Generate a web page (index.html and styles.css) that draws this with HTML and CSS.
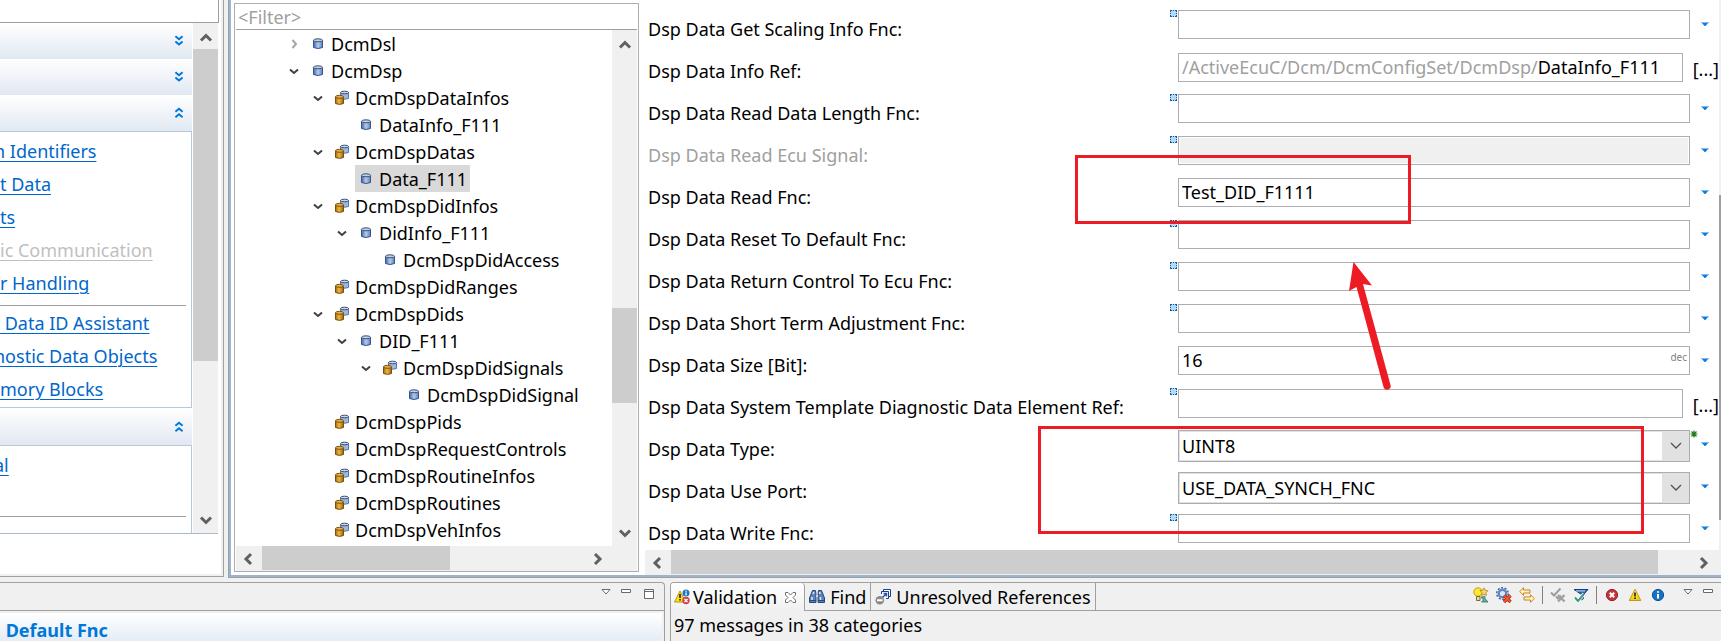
FILE: index.html
```html
<!DOCTYPE html>
<html lang="en">
<head>
<meta charset="utf-8">
<title>Configuration Editor</title>
<link rel="stylesheet" href="styles.css">
</head>
<body>
<svg class="defs" aria-hidden="true">
  <defs>
    <linearGradient id="gBlue"><stop offset="0" stop-color="#3f67a8"/><stop offset=".5" stop-color="#b4cdec"/><stop offset="1" stop-color="#5c80b8"/></linearGradient>
    <linearGradient id="gGold"><stop offset="0" stop-color="#a86c0c"/><stop offset=".45" stop-color="#e8b848"/><stop offset="1" stop-color="#9c6408"/></linearGradient>
    <linearGradient id="gWarn" x2="0" y2="1"><stop offset="0" stop-color="#fff27a"/><stop offset="1" stop-color="#f2c800"/></linearGradient>
  </defs>
  <symbol id="item" viewBox="0 0 16 16"><path d="M3.500 4.500v7q4.500 2 9 0v-7z" fill="url(#gBlue)" stroke="#34558f"/><ellipse cx="8" cy="4.300" rx="4.500" ry="1.500" fill="#bcd3ee" stroke="#44506e"/></symbol>
  <symbol id="group" viewBox="0 0 16 16"><path d="M6.500 2.500v6q4 1.500 8 0v-6z" fill="#9db9df" stroke="#5576ab"/><ellipse cx="10.500" cy="2.500" rx="4" ry="1.300" fill="#c6d9f0" stroke="#3c4d70"/><path d="M1.500 7v6.500q4 1.800 8 0V7z" fill="url(#gGold)" stroke="#7c4d08"/><ellipse cx="5.500" cy="6.800" rx="4" ry="1.500" fill="#e2b04a" stroke="#7c4d08"/></symbol>
  <symbol id="open" viewBox="0 0 16 16"><path d="M4 6.500l4 3.500 4-3.500" fill="none" stroke="#404040" stroke-width="2"/></symbol>
  <symbol id="closed" viewBox="0 0 16 16"><path d="M6.500 4l3.500 4-3.500 4" fill="none" stroke="#a6a6a6" stroke-width="2"/></symbol>
  <symbol id="up" viewBox="0 0 16 16"><path d="M3 10.500l5-5 5 5" fill="none" stroke="#606060" stroke-width="3"/></symbol>
  <symbol id="down" viewBox="0 0 16 16"><path d="M3 5.500l5 5 5-5" fill="none" stroke="#606060" stroke-width="3"/></symbol>
  <symbol id="left" viewBox="0 0 16 16"><path d="M11 3l-5 5 5 5" fill="none" stroke="#606060" stroke-width="3"/></symbol>
  <symbol id="right" viewBox="0 0 16 16"><path d="M5 3l5 5-5 5" fill="none" stroke="#606060" stroke-width="3"/></symbol>
  <symbol id="expand" viewBox="0 0 10 10"><path d="M2 1l3 2.500L8 1M2 5.500L5 8l3-2.500" fill="none" stroke="#0078d7" stroke-width="1.600"/></symbol>
  <symbol id="collapse" viewBox="0 0 10 10"><path d="M2 4l3-2.500L8 4M2 8.500L5 6l3 2.500" fill="none" stroke="#0078d7" stroke-width="1.600"/></symbol>
  <symbol id="drop" viewBox="0 0 8 4"><path d="M0 0h8L4 4.500z" fill="#0a7be0"/><path d="M0 0h8L7 1H1z" fill="#7fbdf2"/></symbol>
  <symbol id="viewmenu" viewBox="0 0 10 6"><path d="M1 .5h8l-4 4.500z" fill="#fff" stroke="#696969"/></symbol>
  <symbol id="min" viewBox="0 0 10 4"><path d="M.5.5h9v3h-9z" fill="#fff" stroke="#696969"/></symbol>
  <symbol id="max" viewBox="0 0 10 10"><path d="M.5.5h9v9h-9zM.5 2.500h9" fill="#fff" stroke="#696969"/></symbol>
  <symbol id="unset" viewBox="0 0 7 7"><path d="M0 0h7v7H0z" fill="#b4daf7"/><path d="M0 .5h7M0 6.500h7" stroke="#1558a0" stroke-dasharray="2 1 1 1 2 0"/><path d="M.5 0v7M6.500 0v7" stroke="#1558a0" stroke-dasharray="2 1 1 1 2 0"/></symbol>
</svg>

<div class="workbench">
  <aside class="tasks">
    <div class="tasks-gap"></div>
    <div class="tasks-scroll">
      <div class="sections">
        <button class="section-head" aria-label="Expand section"><svg><use href="#expand"/></svg></button>
        <button class="section-head" aria-label="Expand section"><svg><use href="#expand"/></svg></button>
        <button class="section-head" aria-label="Collapse section"><svg><use href="#collapse"/></svg></button>
        <nav class="section-body">
          <a class="cut" href="#">n Identifiers</a>
          <a href="#">t Data</a>
          <a href="#">ts</a>
          <a class="off" href="#">ic Communication</a>
          <a href="#">r Handling</a>
          <hr>
          <a href="#">&nbsp;Data ID Assistant</a>
          <a class="cut" href="#">nostic Data Objects</a>
          <a href="#">mory Blocks</a>
        </nav>
        <button class="section-head next" aria-label="Collapse section"><svg><use href="#collapse"/></svg></button>
        <nav class="section-body last">
          <a class="cut" href="#">al</a>
          <hr>
        </nav>
      </div>
      <div class="vbar"><svg class="arr"><use href="#up"/></svg><div class="thumb tasks-thumb"></div><svg class="arr"><use href="#down"/></svg></div>
    </div>
  </aside>

  <main class="editor">
    <section class="tree-pane">
      <input class="filter" type="text" placeholder="&lt;Filter&gt;" aria-label="Filter">
      <div class="tree-scroll">
        <ul class="tree">
          <li class="d0"><svg><use href="#closed"/></svg><span><svg><use href="#item"/></svg>DcmDsl</span></li>
          <li class="d0"><svg><use href="#open"/></svg><span><svg><use href="#item"/></svg>DcmDsp</span></li>
          <li class="d1"><svg><use href="#open"/></svg><span><svg><use href="#group"/></svg>DcmDspDataInfos</span></li>
          <li class="d2"><svg></svg><span><svg><use href="#item"/></svg>DataInfo_F111</span></li>
          <li class="d1"><svg><use href="#open"/></svg><span><svg><use href="#group"/></svg>DcmDspDatas</span></li>
          <li class="d2"><svg></svg><span class="selected"><svg><use href="#item"/></svg>Data_F111</span></li>
          <li class="d1"><svg><use href="#open"/></svg><span><svg><use href="#group"/></svg>DcmDspDidInfos</span></li>
          <li class="d2"><svg><use href="#open"/></svg><span><svg><use href="#item"/></svg>DidInfo_F111</span></li>
          <li class="d3"><svg></svg><span><svg><use href="#item"/></svg>DcmDspDidAccess</span></li>
          <li class="d1"><svg></svg><span><svg><use href="#group"/></svg>DcmDspDidRanges</span></li>
          <li class="d1"><svg><use href="#open"/></svg><span><svg><use href="#group"/></svg>DcmDspDids</span></li>
          <li class="d2"><svg><use href="#open"/></svg><span><svg><use href="#item"/></svg>DID_F111</span></li>
          <li class="d3"><svg><use href="#open"/></svg><span><svg><use href="#group"/></svg>DcmDspDidSignals</span></li>
          <li class="d4"><svg></svg><span><svg><use href="#item"/></svg>DcmDspDidSignal</span></li>
          <li class="d1"><svg></svg><span><svg><use href="#group"/></svg>DcmDspPids</span></li>
          <li class="d1"><svg></svg><span><svg><use href="#group"/></svg>DcmDspRequestControls</span></li>
          <li class="d1"><svg></svg><span><svg><use href="#group"/></svg>DcmDspRoutineInfos</span></li>
          <li class="d1"><svg></svg><span><svg><use href="#group"/></svg>DcmDspRoutines</span></li>
          <li class="d1"><svg></svg><span><svg><use href="#group"/></svg>DcmDspVehInfos</span></li>
        </ul>
        <div class="vbar"><svg class="arr"><use href="#up"/></svg><div class="thumb tree-thumb"></div><svg class="arr"><use href="#down"/></svg></div>
      </div>
      <div class="hbar tree-hbar"><svg class="arr"><use href="#left"/></svg><div class="thumb"></div><svg class="arr"><use href="#right"/></svg></div>
    </section>

    <section class="form-pane">
      <form class="form">
        <div class="row"><label for="f1">Dsp Data Get Scaling Info Fnc:</label><svg class="mark"><use href="#unset"/></svg><input id="f1" type="text"><button type="button" class="menu" aria-label="Menu"><svg><use href="#drop"/></svg></button></div>
        <div class="row ref"><label for="f2">Dsp Data Info Ref:</label><i></i><div id="f2" class="path" role="textbox" tabindex="0"><span>/ActiveEcuC/Dcm/DcmConfigSet/DcmDsp/</span>DataInfo_F111</div><button type="button" class="browse">[...]</button></div>
        <div class="row"><label for="f3">Dsp Data Read Data Length Fnc:</label><svg class="mark"><use href="#unset"/></svg><input id="f3" type="text"><button type="button" class="menu" aria-label="Menu"><svg><use href="#drop"/></svg></button></div>
        <div class="row"><label class="off" for="f4">Dsp Data Read Ecu Signal:</label><svg class="mark"><use href="#unset"/></svg><input id="f4" type="text" disabled><button type="button" class="menu" aria-label="Menu"><svg><use href="#drop"/></svg></button></div>
        <div class="row"><label for="f5">Dsp Data Read Fnc:</label><i></i><input id="f5" type="text" value="Test_DID_F1111"><button type="button" class="menu" aria-label="Menu"><svg><use href="#drop"/></svg></button></div>
        <div class="row"><label for="f6">Dsp Data Reset To Default Fnc:</label><svg class="mark"><use href="#unset"/></svg><input id="f6" type="text"><button type="button" class="menu" aria-label="Menu"><svg><use href="#drop"/></svg></button></div>
        <div class="row"><label for="f7">Dsp Data Return Control To Ecu Fnc:</label><svg class="mark"><use href="#unset"/></svg><input id="f7" type="text"><button type="button" class="menu" aria-label="Menu"><svg><use href="#drop"/></svg></button></div>
        <div class="row"><label for="f8">Dsp Data Short Term Adjustment Fnc:</label><svg class="mark"><use href="#unset"/></svg><input id="f8" type="text"><button type="button" class="menu" aria-label="Menu"><svg><use href="#drop"/></svg></button></div>
        <div class="row"><label for="f9">Dsp Data Size [Bit]:</label><i></i><div class="num"><input id="f9" type="text" value="16"><small>dec</small></div><button type="button" class="menu" aria-label="Menu"><svg><use href="#drop"/></svg></button></div>
        <div class="row ref"><label for="f10">Dsp Data System Template Diagnostic Data Element Ref:</label><svg class="mark"><use href="#unset"/></svg><input id="f10" type="text"><button type="button" class="browse">[...]</button></div>
        <div class="row"><label for="f11">Dsp Data Type:</label><i></i><div class="combo"><select id="f11"><option>UINT8</option></select><svg class="chev" viewBox="0 0 12 8"><path d="M1 1l5 5 5-5" fill="none" stroke="#505050" stroke-width="1.300"/></svg><svg class="star" viewBox="0 0 8 8"><path d="M4 .5v7M.5 4h7M1.500 1.500l5 5M6.500 1.500l-5 5" stroke="#1c7a1c" stroke-width="1.200"/></svg></div><button type="button" class="menu" aria-label="Menu"><svg><use href="#drop"/></svg></button></div>
        <div class="row"><label for="f12">Dsp Data Use Port:</label><i></i><div class="combo"><select id="f12"><option>USE_DATA_SYNCH_FNC</option></select><svg class="chev" viewBox="0 0 12 8"><path d="M1 1l5 5 5-5" fill="none" stroke="#505050" stroke-width="1.300"/></svg></div><button type="button" class="menu" aria-label="Menu"><svg><use href="#drop"/></svg></button></div>
        <div class="row"><label for="f13">Dsp Data Write Fnc:</label><svg class="mark"><use href="#unset"/></svg><input id="f13" type="text"><button type="button" class="menu" aria-label="Menu"><svg><use href="#drop"/></svg></button></div>
      </form>
      <div class="form-bar"><div class="thumb"></div></div>
      <div class="hbar form-hbar"><svg class="arr"><use href="#left"/></svg><div class="thumb"></div><svg class="arr"><use href="#right"/></svg></div>

      <div class="note note-read"></div>
      <div class="note note-type"></div>
      <svg class="pointer" viewBox="0 0 48 132"><path d="M8.500 0L27 23.500l-9-1.500L45.500 123a3.500 3.500 0 0 1-7 2L11.500 25 4 29z" fill="#ed1c24"/></svg>
    </section>
  </main>
</div>

<div class="views">
  <section class="view view-left">
    <header class="bar">
      <div class="controls">
        <svg class="i-menu"><use href="#viewmenu"/></svg>
        <svg class="i-min"><use href="#min"/></svg>
        <svg class="i-max"><use href="#max"/></svg>
      </div>
    </header>
    <h2>&nbsp;Default Fnc</h2>
  </section>

  <section class="view view-right">
    <header class="bar">
      <button class="tab active">
        <svg class="i16" viewBox="0 0 16 16"><path d="M6 2L11.500 13H.5z" fill="#ffe020" stroke="#b89400"/><path d="M5.200 5h1.600v4H5.200zM5.200 10h1.600v1.500H5.200z" fill="#222"/><circle cx="12" cy="4" r="3.500" fill="#1b78c8"/><path d="M11.400 1.500h1.300v1.200h-1.300zM11.400 3.400h1.300v3h-1.300z" fill="#fff"/><circle cx="12" cy="11.500" r="3.700" fill="#d4424a"/><path d="M10.500 10l3 3m0-3l-3 3" stroke="#fff" stroke-width="1.300"/></svg>
        <span>Validation</span>
        <svg class="close" viewBox="0 0 11 11"><path d="M.5.5h2.500l2.500 2.500L8 .5h2.500V3L8 5.500 10.500 8v2.500H8L5.500 8 3 10.500H.5V8L3 5.500.5 3z" fill="#fff" stroke="#6e6e6e"/></svg>
      </button>
      <button class="tab">
        <svg class="i16" viewBox="0 0 16 16"><path d="M3.500 1.500h3l.5 4v8H.5V9zM9.500 1.500h3L15.500 9v4.500H9v-8z" fill="#5c83b8" stroke="#28487c"/><path d="M3 8v3M11.500 8v3M7 7h2M4.500 3v2M10.800 3v2" stroke="#dce8f6" stroke-width="1.500"/><path d="M1 11.500h6M9 11.500h6" stroke="#28487c"/></svg>
        <span>Find</span>
      </button>
      <button class="tab">
        <svg class="i16" viewBox="0 0 16 16"><path d="M8.500 3V.5h7v7H13M6.500 5V2.500h7v7H11" fill="#fff" stroke="#1c3f8c"/><path d="M7.500 8.500L11 5M8.500 4.500h3v3" fill="none" stroke="#1f56b4" stroke-width="1.500"/><circle cx="4.800" cy="11.200" r="4.300" fill="#8a8a8a"/><path d="M2 10.200h5.600v2H2z" fill="#fff"/></svg>
        <span>Unresolved References</span>
      </button>
      <div class="tools">
        <button class="tool" aria-label="Quick fix"><svg viewBox="0 0 16 16"><circle cx="5" cy="5" r="4.200" fill="#ffe92e" stroke="#c99a10"/><path d="M3.500 9.500h3.500v4H3.500z" fill="#e8e2a0" stroke="#7c6a2a"/><path d="M11 .8l1.200 2.400 2.800.5-2 2 .4 2.800L11 7.300 8.700 8.500 9 5.700l-2-2 2.800-.5z" fill="#f7d867" stroke="#a8852a" stroke-width=".8"/><path d="M8 10l4-.5v2l3 3.500H8.500l2-2z" fill="#5fae9c" stroke="#2f7466" stroke-width=".8"/></svg></button>
        <button class="tool" aria-label="Clear configuration"><svg viewBox="0 0 16 16"><circle cx="6.500" cy="6.500" r="5.800" fill="none" stroke="#3d629e" stroke-width="1.400" stroke-dasharray="2 1.600"/><circle cx="6.500" cy="6.500" r="3.800" fill="#dbe6f5" stroke="#5f87c4" stroke-width="2.400"/><path d="M8 8.500l6.500 6.500M14.500 8.500L8 15" stroke="#8c1c08" stroke-width="3.200"/><path d="M8 8.500l6.500 6.500M14.500 8.500L8 15" stroke="#f4552c" stroke-width="2"/></svg></button>
        <button class="tool" aria-label="Synchronize"><svg viewBox="0 0 16 16"><path d="M.7 4.500L4.500.7v2.300h6.500v3H4.500v2.300zM15.300 11.500l-3.800-3.800V10H5v3h6.500v2.300z" fill="#fff3c4" stroke="#c8861c"/></svg></button>
        <hr>
        <button class="tool" aria-label="Remove acknowledged" disabled><svg viewBox="0 0 16 16"><path d="M1 5.500l3 3L10.500 1.500M6 9.500l2 2 3-3" fill="none" stroke="#9c9c9c" stroke-width="2"/><path d="M8 8l6.500 6.500M14.500 8L8 14.500" stroke="#a0a0a0" stroke-width="2.400"/></svg></button>
        <button class="tool" aria-label="Filter"><svg viewBox="0 0 16 16"><path d="M1 2.500h14L10.500 7.500v4l-2 1.500V7.500z" fill="#2f66b8" stroke="#173a7c"/><path d="M3 3.800h9" stroke="#a8ccf2" stroke-width="1.200"/><path d="M2 10.500l3 3.500 6-7" fill="none" stroke="#fff" stroke-width="3.500"/><path d="M2 10.500l3 3.500 6-7" fill="none" stroke="#3b9a80" stroke-width="2"/></svg></button>
        <hr>
        <button class="tool" aria-label="Errors"><svg viewBox="0 0 16 16"><circle cx="8" cy="8" r="5.600" fill="#c8323a" stroke="#8e2228"/><path d="M5.800 5.800l4.400 4.400M10.200 5.800l-4.400 4.400" stroke="#fff" stroke-width="2"/></svg></button>
        <button class="tool" aria-label="Warnings"><svg viewBox="0 0 16 16"><path d="M8 2.200L13.800 13.500H2.200z" fill="url(#gWarn)" stroke="#c09a20"/><path d="M7.200 5.500h1.600v4H7.200zM7.200 10.500h1.600V12H7.200z" fill="#222"/></svg></button>
        <button class="tool" aria-label="Infos"><svg viewBox="0 0 16 16"><circle cx="8" cy="8" r="5.600" fill="#1872c4" stroke="#0c4f94"/><path d="M7 4.200h2v1.600H7zM7 7h2v4.600H7z" fill="#fff"/></svg></button>
      </div>
      <div class="controls">
        <svg class="i-menu"><use href="#viewmenu"/></svg>
        <svg class="i-min"><use href="#min"/></svg>
      </div>
    </header>
    <p>97 messages in 38 categories</p>
  </section>
</div>
</body>
</html>
```
FILE: styles.css
```css
* { box-sizing: border-box; }
html, body { margin: 0; height: 100%; }
body {
  display: flex;
  flex-direction: column;
  overflow: hidden;
  background: #f0f0f0;
  color: #000;
  font: 18px/26px "Noto Sans", "Open Sans", sans-serif;
}
button, input, select { font: inherit; color: inherit; margin: 0; padding: 0; border: 0; background: none; border-radius: 0; }
svg { display: block; flex: none; }
.defs { position: absolute; width: 0; height: 0; }

.workbench { display: flex; flex: 1; min-height: 0; gap: 5px; padding-bottom: 1px; }

/* task list */
.tasks { display: flex; flex-direction: column; width: 224px; flex: none; background: #fff; border: solid #a0a0a0; border-width: 0 1px 1px 0; box-shadow: inset -2px -2px #f0f0f0; }
.tasks-gap { height: 23px; width: 219px; border: solid #a0a0a0; border-width: 0 1px 1px 0; flex: none; }
.tasks-scroll { display: flex; width: 218px; height: 511px; border-bottom: 1px solid #a9b8cb; flex: none; }
.sections { flex: 1; overflow: hidden; background: #fff; margin-right: 1px; }
.section-head { display: flex; justify-content: flex-end; align-items: center; width: 100%; height: 36px; padding-right: 7px; background: linear-gradient(#fff, #e1e8f2); }
.section-head.next { height: 37px; }
.section-head svg { width: 12px; height: 12px; }
.section-body { display: flex; flex-direction: column; align-items: flex-start; border: solid #b5c9de; border-width: 1px 1px 1px 0; padding: 3px 5px 11px 0; height: 277px; overflow: hidden; }
.section-body a { color: #0066cc; line-height: 33px; white-space: nowrap; text-underline-offset: 3px; text-decoration-thickness: 1px; }
.section-body .off { color: #c0c0c0; }
.section-body .cut { margin-left: -6px; }
.section-body hr { width: 100%; border: 0; border-top: 1px solid #a0a0a0; margin: 5px 0 1px; }
.section-body.last { border-bottom: 0; height: auto; padding-bottom: 16px; }
.section-body.last hr { margin-top: 34px; }

/* scroll bars */
.vbar { display: flex; flex-direction: column; width: 25px; background: #f0f0f0; padding: 7px 0 5px; flex: none; align-items: center; }
.arr { width: 16px; height: 16px; }
.thumb { background: #cdcdcd; }
.vbar .thumb { width: 25px; }
.vbar .arr:last-child { margin-top: auto; }
.tasks-thumb { height: 312px; margin-top: 3px; }
.tree-thumb { height: 95px; margin-top: 255px; }
.hbar { display: flex; align-items: center; height: 25px; background: #f0f0f0; padding: 0 7px 0 4px; }
.hbar .thumb { height: 24px; margin: 0 auto 1px 6px; }

/* editor */
.editor { display: flex; flex: 1; min-width: 0; background: #fff; border: solid #99b4d1; border-width: 0 0 2px 2px; box-shadow: 0 0 0 1px #a0a0a0; }
.tree-pane { display: flex; flex-direction: column; width: 405px; flex: none; margin: 3px 0 3px 3px; border: 1px solid #abadb3; padding: 0 1px 0; }
.filter { height: 26px; border-bottom: 1px solid #a0a0a0; outline: 0; padding: 0 2px; flex: none; }
.filter::placeholder { color: #a0a0a0; opacity: 1; }
.tree-scroll { display: flex; flex: 1; min-height: 0; }
.tree { flex: 1; margin: 0; padding: 0; list-style: none; overflow: hidden; }
.tree li { display: flex; align-items: center; height: 27px; white-space: nowrap; }
.tree li > svg { width: 16px; height: 16px; }
.tree li span { display: flex; align-items: center; gap: 5px; height: 27px; margin-left: 5px; padding: 0 3px; }
.tree span svg { width: 16px; height: 16px; }
.tree .selected { background: #d9d9d9; }
.d0 { padding-left: 50px; }
.d1 { padding-left: 74px; }
.d2 { padding-left: 98px; }
.d3 { padding-left: 122px; }
.d4 { padding-left: 146px; }
.tree-hbar { padding-right: 31px; flex: none; }
.tree-hbar .thumb { width: 188px; }

.form-pane { position: relative; display: flex; flex-wrap: wrap; align-content: flex-start; flex: 1; min-width: 0; padding-left: 6px; }
.form { flex: 1; min-width: 0; padding: 10px 0 0 3px; }
.row { display: grid; grid-template-columns: 1fr 9px 512px 29px; align-items: start; height: 42px; white-space: nowrap; }
.row.ref { grid-template-columns: 1fr 9px 505px 36px; }
.row:last-child { height: 30px; }
.row label { padding-top: 6px; }
.row .off { color: #a0a0a0; }
.row input, .path { width: 100%; height: 29px; border: 1px solid #abadb3; padding: 0 3px 1px; background: #fff; }
.row.ref input, .path { margin-top: 1px; }
.row input:disabled { background: #f0f0f0; box-shadow: inset 0 0 0 1px #fff; }
.path span { color: #a0a0a0; }
.mark { width: 7px; height: 7px; margin-left: 1px; }
.menu { display: flex; justify-content: center; padding-top: 12px; }
.menu svg { width: 8px; height: 4px; }
.browse { padding-top: 4px; text-align: right; }
.num { position: relative; }
.num small { position: absolute; right: 3px; top: 4px; font-size: 10px; line-height: 14px; color: #808080; }
.combo { position: relative; }
.combo select { appearance: none; width: 100%; height: 32px; border: 1px solid #abadb3; box-shadow: inset 0 0 0 1px #e1e1e1; padding: 0 3px; background: linear-gradient(90deg, #fff calc(100% - 27px), #e1e1e1 0); }
.chev { position: absolute; right: 8px; top: 12px; width: 12px; height: 8px; }
.star { position: absolute; right: -8px; top: 0; width: 8px; height: 8px; }
.form-bar { width: 2px; padding-top: 195px; background: #f0f0f0; height: 550px; }
.form-bar .thumb { height: 325px; background: #a0a0a0; }
.form-hbar { width: 100%; padding-right: 9px; }
.form-hbar .thumb { width: 987px; }

.note { position: absolute; border: 3px solid #ed1c24; pointer-events: none; }
.note-read { right: 310px; top: 155px; width: 336px; height: 69px; }
.note-type { right: 77px; top: 426px; width: 606px; height: 108px; }
.pointer { position: absolute; right: 328px; top: 262px; width: 48px; height: 132px; }

/* bottom views */
.views { display: flex; flex: none; height: 59px; margin-top: 4px; gap: 5px; }
.view { border: solid #a0a0a0; border-width: 1px 1px 0; border-radius: 4px 4px 0 0; overflow: hidden; }
.view-left { width: 665px; border-left: 0; border-top-left-radius: 0; }
.view-right { flex: 1; border-right: 0; border-top-right-radius: 0; }
.bar { display: flex; height: 28px; box-shadow: inset 0 -1px #a0a0a0; }
.controls { display: flex; margin-left: auto; padding-top: 6px; gap: 10px; }
.view-left .controls { padding-right: 10px; }
.view-right .controls { margin-left: 17px; padding-right: 8px; }
.i-menu { width: 10px; height: 6px; }
.i-min { width: 10px; height: 4px; }
.i-max { width: 10px; height: 10px; margin-left: 3px; }
.view h2 { margin: 2px 2px 0 0; padding-left: 1px; font-size: 18px; line-height: 34px; color: #0078d7; background: linear-gradient(#fff, #dfe8f3); }
.tab { display: flex; align-items: center; gap: 5px; padding: 0 4px; border-right: 1px solid #a0a0a0; white-space: nowrap; }
.tab.active { gap: 3px; padding: 0 4px 0 3px; background: linear-gradient(#fff, #f0f0f0); border-radius: 0 4px 0 0; }
.i16 { width: 16px; height: 16px; }
.close { width: 11px; height: 11px; margin: 0 4px 0 5px; }
.tools { display: flex; align-items: center; gap: 7px; margin-left: auto; padding-bottom: 4px; }
.tool svg { width: 16px; height: 16px; }
.tools hr { width: 1px; height: 18px; margin: 0; border: 0; background: #808080; }
.view p { margin: 0 0 0 3px; line-height: 28px; }
```
